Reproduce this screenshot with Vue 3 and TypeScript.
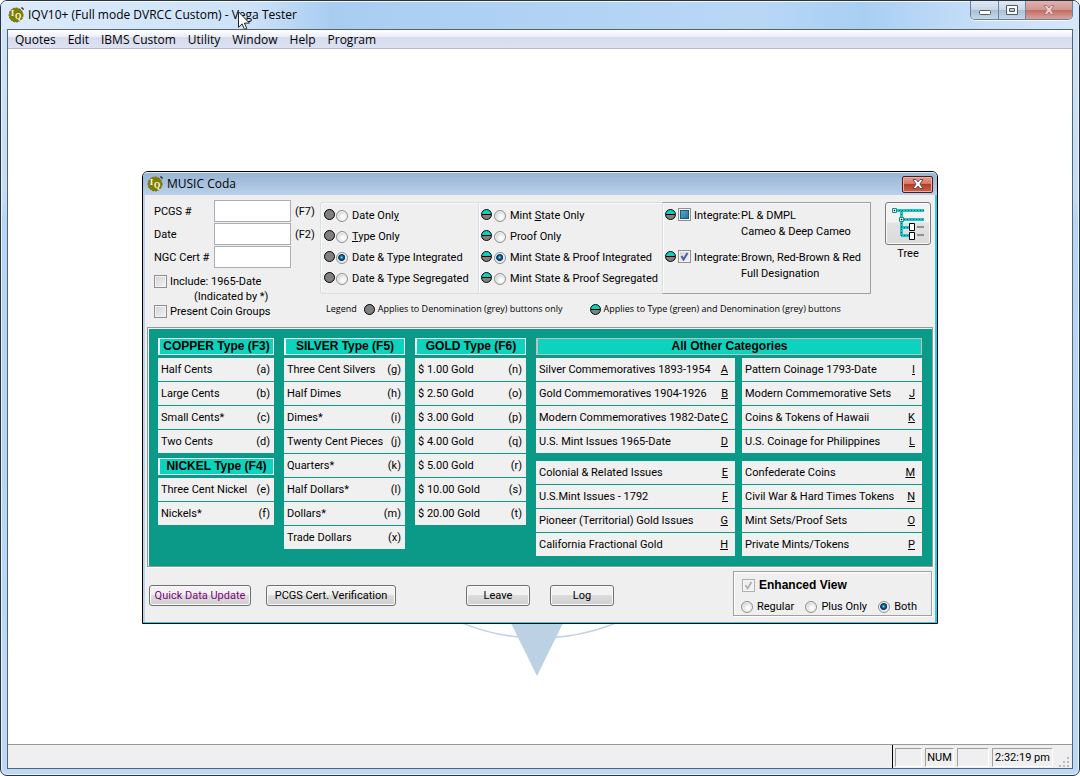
<script setup lang="ts">
import { ref } from 'vue'

interface Entry {
  label: string
  key: string
}

const menus: string[] = ['Quotes', 'Edit', 'IBMS Custom', 'Utility', 'Window', 'Help', 'Program']

const toEntries = (rows: [string, string][]): Entry[] => rows.map(([label, key]) => ({ label, key }))

const copper = toEntries([['Half Cents', '(a)'], ['Large Cents', '(b)'], ['Small Cents*', '(c)'], ['Two Cents', '(d)']])
const nickel = toEntries([['Three Cent Nickel', '(e)'], ['Nickels*', '(f)']])
const silver = toEntries([
  ['Three Cent Silvers', '(g)'], ['Half Dimes', '(h)'], ['Dimes*', '(i)'], ['Twenty Cent Pieces', '(j)'],
  ['Quarters*', '(k)'], ['Half Dollars*', '(l)'], ['Dollars*', '(m)'], ['Trade Dollars', '(x)'],
])
const gold = toEntries([
  ['$ 1.00 Gold', '(n)'], ['$ 2.50 Gold', '(o)'], ['$ 3.00 Gold', '(p)'], ['$ 4.00 Gold', '(q)'],
  ['$ 5.00 Gold', '(r)'], ['$ 10.00 Gold', '(s)'], ['$ 20.00 Gold', '(t)'],
])

const typeColumns = [
  { id: 'copper', sections: [{ title: 'COPPER Type (F3)', rows: copper }, { title: 'NICKEL Type (F4)', rows: nickel }] },
  { id: 'silver', sections: [{ title: 'SILVER Type (F5)', rows: silver }] },
  { id: 'gold', sections: [{ title: 'GOLD Type (F6)', rows: gold }] },
]

const otherBlocks: Entry[][] = [
  toEntries([['Silver Commemoratives 1893-1954', 'A'], ['Gold Commemoratives 1904-1926', 'B'], ['Modern Commemoratives 1982-Date', 'C'], ['U.S. Mint Issues 1965-Date', 'D']]),
  toEntries([['Pattern Coinage 1793-Date', 'I'], ['Modern Commemorative Sets', 'J'], ['Coins & Tokens of Hawaii', 'K'], ['U.S. Coinage for Philippines', 'L']]),
  toEntries([['Colonial & Related Issues', 'E'], ['U.S.Mint Issues - 1792', 'F'], ['Pioneer (Territorial) Gold Issues', 'G'], ['California Fractional Gold', 'H']]),
  toEntries([['Confederate Coins', 'M'], ['Civil War & Hard Times Tokens', 'N'], ['Mint Sets/Proof Sets', 'O'], ['Private Mints/Tokens', 'P']]),
]

const dateOptions = [
  { value: 'date', before: 'Date Onl', hot: 'y', after: '' },
  { value: 'type', before: '', hot: 'T', after: 'ype Only' },
  { value: 'integrated', before: 'Date & Type Integrated', hot: '', after: '' },
  { value: 'segregated', before: 'Date & Type Segregated', hot: '', after: '' },
]
const mintOptions = [
  { value: 'mint', before: 'Mint ', hot: 'S', after: 'tate Only' },
  { value: 'proof', before: 'Proof Only', hot: '', after: '' },
  { value: 'integrated', before: 'Mint State & Proof Integrated', hot: '', after: '' },
  { value: 'segregated', before: 'Mint State & Proof Segregated', hot: '', after: '' },
]
const viewOptions = ['Regular', 'Plus Only', 'Both']

const pcgs = ref('')
const coinDate = ref('')
const ngc = ref('')
const include1965 = ref(false)
const presentGroups = ref(false)
const dateMode = ref('integrated')
const mintMode = ref('integrated')
const integratePl = ref(false)
const integrateBrown = ref(true)
const enhanced = ref(true)
const view = ref('Both')
</script>

<template>
  <div class="window">
    <header class="titlebar">
      <svg class="app-icon" viewBox="0 0 16 16" aria-hidden="true">
        <path d="M13 1h2v2" fill="none" stroke="#111" />
        <circle cx="8" cy="8" r="7" fill="#808000" stroke="#6b6b10" stroke-dasharray="2 1" />
        <text x="3" y="9" class="icon-text">I</text>
        <text x="7" y="12" class="icon-text">Q</text>
      </svg>
      <h1 class="title">IQV10+ (Full mode DVRCC Custom) - Vega Tester</h1>
      <div class="caption-buttons">
        <button type="button" aria-label="Minimize" class="cap cap-min">
          <svg viewBox="0 0 14 12"><rect x="1.500" y="6.500" width="11" height="4" rx="1" fill="#fff" stroke="#535666" /></svg>
        </button>
        <button type="button" aria-label="Maximize" class="cap cap-max">
          <svg viewBox="0 0 14 12"><path fill-rule="evenodd" d="M1.500 1.500h11v9h-11zM4.500 4.500h5v3h-5z" fill="#fff" stroke="#535666" /></svg>
        </button>
        <button type="button" aria-label="Close" class="cap cap-close">
          <svg viewBox="0 0 14 12"><path d="M2 1.500h3l2 2.500 2-2.500h3L9 6l3 4.500H9L7 8l-2 2.500H2L5 6z" fill="#f1cfcd" stroke="#a77b7d" /></svg>
        </button>
      </div>
      <svg class="cursor" viewBox="0 0 12 19" aria-hidden="true">
        <path d="M.5.8v15.500l3.600-3.400 2.400 5.500 2.300-1-2.400-5.300h5z" fill="#fff" stroke="#222" />
      </svg>
    </header>

    <div class="frame">
      <nav class="menubar">
        <button v-for="menu in menus" :key="menu" type="button" class="menu">{{ menu }}</button>
      </nav>

      <main class="workspace">
        <svg class="emblem" viewBox="0 0 420 560" aria-hidden="true">
          <circle cx="211" cy="316" r="205" fill="none" stroke="#bdd1e5" stroke-width="1.500" />
          <path d="M141 421h136l-68 138z" fill="#bdd1e5" />
        </svg>

        <section class="dialog" role="dialog" aria-labelledby="dialog-title">
          <header class="dialog-title">
            <svg class="app-icon" viewBox="0 0 16 16" aria-hidden="true">
              <path d="M13 1h2v2" fill="none" stroke="#111" />
              <circle cx="8" cy="8" r="7" fill="#808000" stroke="#6b6b10" stroke-dasharray="2 1" />
              <text x="3" y="9" class="icon-text">I</text>
              <text x="7" y="12" class="icon-text">Q</text>
            </svg>
            <h2 id="dialog-title" class="title">MUSIC Coda</h2>
            <button type="button" class="dialog-close" aria-label="Close">
              <svg viewBox="0 0 14 12"><path d="M2 1.500h3l2 2.500 2-2.500h3L9 6l3 4.500H9L7 8l-2 2.500H2L5 6z" fill="#fff" stroke="#5a4a55" /></svg>
            </button>
          </header>

          <div class="dialog-body">
            <div class="top">
              <div class="lookup">
                <div class="fields">
                  <label for="pcgs">PCGS #</label>
                  <input id="pcgs" v-model="pcgs" type="text" class="field" />
                  <span>(F7)</span>
                  <label for="coin-date">Date</label>
                  <input id="coin-date" v-model="coinDate" type="text" class="field" />
                  <span>(F2)</span>
                  <label for="ngc">NGC Cert #</label>
                  <input id="ngc" v-model="ngc" type="text" class="field" />
                </div>
                <div class="lookup-checks">
                  <label class="check-line"><input v-model="include1965" type="checkbox" class="check" />Include: 1965-Date</label>
                  <span class="note">(Indicated by *)</span>
                  <label class="check-line"><input v-model="presentGroups" type="checkbox" class="check" />Present Coin Groups</label>
                </div>
              </div>

              <div class="options">
                <div class="groups">
                  <div class="group" role="radiogroup" aria-label="Date and type">
                    <label v-for="o in dateOptions" :key="o.value" class="option">
                      <i class="dot grey"></i>
                      <input v-model="dateMode" type="radio" name="date-mode" :value="o.value" class="radio" />
                      <span class="option-text">{{ o.before }}<u v-if="o.hot">{{ o.hot }}</u>{{ o.after }}</span>
                    </label>
                  </div>
                  <div class="group group-mint" role="radiogroup" aria-label="Mint state and proof">
                    <label v-for="o in mintOptions" :key="o.value" class="option">
                      <i class="dot split"></i>
                      <input v-model="mintMode" type="radio" name="mint-mode" :value="o.value" class="radio" />
                      <span class="option-text">{{ o.before }}<u v-if="o.hot">{{ o.hot }}</u>{{ o.after }}</span>
                    </label>
                  </div>
                  <div class="group group-integrate">
                    <label class="integrate">
                      <i class="dot split"></i>
                      <input v-model="integratePl" type="checkbox" class="check" :indeterminate.prop="true" />
                      <span class="integrate-name">Integrate:</span>
                      <span class="integrate-text">PL &amp; DMPL<br />Cameo &amp; Deep Cameo</span>
                    </label>
                    <label class="integrate">
                      <i class="dot split"></i>
                      <input v-model="integrateBrown" type="checkbox" class="check" />
                      <span class="integrate-name">Integrate:</span>
                      <span class="integrate-text">Brown, Red-Brown &amp; Red<br />Full Designation</span>
                    </label>
                  </div>
                </div>
                <div class="legend">
                  <span>Legend</span>
                  <span class="legend-item"><i class="dot grey"></i>Applies to Denomination (grey) buttons only</span>
                  <span class="legend-item legend-type"><i class="dot split"></i>Applies to Type (green) and Denomination (grey) buttons</span>
                </div>
              </div>

              <div class="tree">
                <button id="tree-button" type="button" class="tree-button" aria-labelledby="tree-label">
                  <svg viewBox="0 0 34 34" aria-hidden="true">
                    <path d="M2 3.500h31M10.500 4v25M10 12.500h23M10 20.500h8M10 28.500h8" fill="none" stroke="#1cc3cf" stroke-width="3" />
                    <path d="M2 3.500h31M10.500 4v25M10 12.500h23M10 20.500h8M10 28.500h8" fill="none" stroke="#0a6a50" stroke-dasharray="1 2" />
                    <path d="M26 20h7M26 28h7" stroke="#909090" stroke-width="2" />
                    <path d="M1.500 1.500h4v4h-4zM8.500 10.500h4v4h-4z" fill="#fff" stroke="#0d8f9a" />
                    <path d="M3 3h1v1H3zM10 12h1v1h-1z" fill="#000" stroke="#000" stroke-width=".5" />
                    <path d="M18.500 16.500h5v7h-5zM18.500 25.500h5v7h-5z" fill="#fff" stroke="#000" />
                  </svg>
                </button>
                <span id="tree-label">Tree</span>
              </div>
            </div>

            <div class="catalog">
              <div v-for="column in typeColumns" :key="column.id" class="column">
                <section v-for="s in column.sections" :key="s.title" class="section">
                  <h3 class="heading">{{ s.title }}</h3>
                  <div class="rows">
                    <button v-for="row in s.rows" :key="row.key" type="button" class="row">
                      <span>{{ row.label }}</span><span class="key">{{ row.key }}</span>
                    </button>
                  </div>
                </section>
              </div>
              <section class="section">
                <h3 class="heading heading-other">All Other Categories</h3>
                <div class="others">
                  <div v-for="(block, i) in otherBlocks" :key="i" class="rows">
                    <button v-for="row in block" :key="row.key" type="button" class="row row-other">
                      <span>{{ row.label }}</span><u>{{ row.key }}</u>
                    </button>
                  </div>
                </div>
              </section>
            </div>

            <footer class="actions">
              <button type="button" class="action quick">Quick Data Update</button>
              <button type="button" class="action verify">PCGS Cert. Verification</button>
              <div class="center-actions">
                <button type="button" class="action">Leave</button>
                <button type="button" class="action">Log</button>
              </div>
              <div class="enhanced">
                <label class="enhanced-title"><input v-model="enhanced" type="checkbox" class="check" disabled />Enhanced View</label>
                <div class="views">
                  <label v-for="v in viewOptions" :key="v" class="view">
                    <input v-model="view" type="radio" name="view" :value="v" class="radio" />{{ v }}
                  </label>
                </div>
              </div>
            </footer>
          </div>
        </section>
      </main>

      <footer class="statusbar">
        <div class="status-panels">
          <span class="panel panel-small"></span>
          <span class="panel panel-num">NUM</span>
          <span class="panel panel-mid"></span>
          <span class="panel panel-time">2:32:19 pm</span>
          <svg class="grip" viewBox="0 0 10 10" aria-hidden="true">
            <path d="M8 0h2v2H8zM4 4h2v2H4zM8 4h2v2H8zM0 8h2v2H0zM4 8h2v2H4zM8 8h2v2H8z" fill="#bbb" />
          </svg>
        </div>
      </footer>
    </div>
  </div>
</template>

<style>
html,
body {
  margin: 0;
  background: #fff;
}
</style>

<style scoped>
* {
  box-sizing: border-box;
}

button,
input {
  margin: 0;
  padding: 0;
  font: inherit;
  color: inherit;
}

button {
  border: 0;
  background: none;
}

.window {
  display: flex;
  flex-direction: column;
  min-height: 100vh;
  padding: 0 6px 6px;
  border: 1px solid #2a3440;
  border-radius: 7px;
  background: linear-gradient(#cfe4fb 0, #c3dcf7 200px, #b4d5f5 220px, #bcd9f7 100%);
  box-shadow: inset 0 0 0 1px #e8f4ff;
  font-family: Roboto, "Liberation Sans", Arial, sans-serif;
  font-size: 11px;
  color: #000;
}

.titlebar {
  position: relative;
  display: flex;
  align-items: flex-start;
  height: 28px;
  margin: 0 -6px;
  padding-left: 7px;
  border-top: 1px solid #f2f9ff;
  border-radius: 6px 6px 0 0;
  background: linear-gradient(90deg, #dcebfb 0, #cde2f8 250px, #a9cdf1 330px, #b9d7f5 70%, #a8cff2 80%, #c9e0f9 92%, #d5e7fb 100%);
}

.app-icon {
  width: 16px;
  height: 16px;
  flex: none;
}

.titlebar .app-icon {
  margin-top: 5px;
}

.icon-text {
  font: bold 8px "Liberation Serif", serif;
  fill: #fff;
}

.title {
  margin: 0 0 0 4px;
  font: 12px/16px "Open Sans", "Noto Sans", sans-serif;
}

.titlebar .title {
  margin-top: 5px;
}

.caption-buttons {
  display: flex;
  margin: -1px 6px 0 auto;
  border: 1px solid #6f7f92;
  border-top: 0;
  border-radius: 0 0 5px 5px;
  overflow: hidden;
  box-shadow: 0 1px 0 #f2f9ff;
}

.cap {
  display: flex;
  align-items: center;
  justify-content: center;
  width: 28px;
  height: 18px;
  border-right: 1px solid #71849a;
  background: linear-gradient(#dfe9f4 0, #c8d7e7 48%, #a9bfd6 50%, #c4d8ec 100%);
}

.cap svg,
.dialog-close svg {
  width: 14px;
  height: 12px;
}

.cap-max {
  width: 27px;
}

.cap-close {
  width: 46px;
  border-right: 0;
  background: linear-gradient(#e0b2ae 0, #d29690 48%, #c06b64 50%, #d9a49b 100%);
}

.cursor {
  position: absolute;
  top: 9px;
  left: 237px;
  width: 12px;
  height: 19px;
  z-index: 2;
}

.frame {
  display: flex;
  flex: 1;
  flex-direction: column;
  border: 1px solid #59626b;
  background: #fff;
}

.menubar {
  display: flex;
  height: 19px;
  padding-left: 7px;
  gap: 12px;
  border-bottom: 1px solid #b5bacb;
  background: linear-gradient(#fff 0, #eceff7 38%, #d6dcee 42%, #dde2f2 100%);
  font: 12px/19px "Open Sans", "Noto Sans", sans-serif;
}

.workspace {
  position: relative;
  display: flex;
  flex: 1;
  align-items: center;
  padding: 2px 134px 0;
}

.emblem {
  position: absolute;
  top: 50%;
  left: 50%;
  width: 420px;
  height: 560px;
  margin: -280px 0 0 -212px;
}

.dialog {
  position: relative;
  flex: 1;
  min-width: 0;
  padding: 0 2px 1px;
  border: 1px solid #000;
  border-radius: 6px 6px 0 0;
  background: linear-gradient(90deg, #b9d2ee 50%, #35c8ee 50%);
  box-shadow: inset 0 -1px 0 #35c8ee;
}

.dialog-title {
  display: flex;
  align-items: center;
  height: 23px;
  margin: 0 -2px;
  padding: 0 4px;
  border-top: 1px solid #e4effa;
  border-radius: 5px 5px 0 0;
  background: linear-gradient(#98b4d2, #b9d1ea);
}

.dialog-close {
  display: flex;
  align-items: center;
  justify-content: center;
  width: 31px;
  height: 17px;
  margin-left: auto;
  border: 1px solid #4c1a20;
  border-radius: 2px;
  background: linear-gradient(#e5a091 0, #d37763 45%, #b83c26 50%, #cf6249 100%);
  box-shadow: inset 0 0 0 1px #e6b0a4;
}

.dialog-body {
  background: #efefef;
}

.top {
  display: flex;
  height: 132px;
  padding: 5px 4px 0 9px;
}

.lookup {
  flex: none;
  width: 166px;
}

.fields {
  display: grid;
  grid-template-columns: 60px 77px auto;
  grid-auto-rows: 22px;
  row-gap: 1px;
  align-items: center;
}

.fields span {
  padding-left: 4px;
}

.field {
  width: 77px;
  height: 22px;
  padding: 0 3px;
  border: 1px solid #abadb3;
  background: #fff;
}

.lookup-checks {
  display: flex;
  flex-direction: column;
  margin-top: 6px;
  line-height: 15px;
}

.check-line {
  display: flex;
  align-items: center;
  gap: 3px;
  white-space: nowrap;
}

.note {
  padding-left: 40px;
}

.check {
  appearance: none;
  flex: none;
  width: 13px;
  height: 13px;
  border: 1px solid #8e8f8f;
  background: linear-gradient(135deg, #cfd2d6, #f4f4f4);
  box-shadow: inset 0 0 0 1px #f4f4f4;
}

.check:checked {
  background: url("data:image/svg+xml,%3Csvg xmlns='http://www.w3.org/2000/svg' viewBox='0 0 11 11'%3E%3Cpath d='M2.500 5l2 3.500L8.500 2' fill='none' stroke='%234b5e9c' stroke-width='2'/%3E%3C/svg%3E") center / 11px 11px no-repeat, linear-gradient(135deg, #cfd2d6, #f4f4f4);
}

.check:disabled {
  border-color: #b1b1b1;
  background: url("data:image/svg+xml,%3Csvg xmlns='http://www.w3.org/2000/svg' viewBox='0 0 11 11'%3E%3Cpath d='M2.500 5l2 3.500L8.500 2' fill='none' stroke='%23aaa' stroke-width='1.500'/%3E%3C/svg%3E") center / 11px 11px no-repeat, #f0f0f0;
}

.check:indeterminate {
  background: linear-gradient(135deg, #5fb9dc, #17648f);
  box-shadow: inset 0 0 0 1px #f4f4f4, inset 0 0 0 2px #23557a;
}

.radio {
  appearance: none;
  flex: none;
  width: 12px;
  height: 12px;
  border: 1px solid #8e8f8f;
  border-radius: 50%;
  background: radial-gradient(circle at 60% 60%, #fafafa 20%, #c9cdd2 75%);
  box-shadow: inset 0 0 0 1px #f4f4f4;
}

.radio:checked {
  background: radial-gradient(circle at 46% 44%, #8fe0ff 0, #2181b5 16%, #0b3353 34%, #10426a 42%, #e3e7eb 50%);
}

.options {
  flex: 1;
  min-width: 0;
  padding-top: 2px;
}

.groups {
  display: grid;
  grid-template-columns: 158fr 184fr 209fr;
}

.group {
  display: flex;
  flex-direction: column;
  height: 92px;
  padding: 2px 0 0 3px;
  border: 1px solid #d5dfe5;
  border-right: 0;
  border-radius: 3px 0 0 3px;
  box-shadow: inset 1px 1px 0 #fbfbfb;
  white-space: nowrap;
}

.option {
  display: flex;
  align-items: center;
  height: 21px;
}

.dot {
  flex: none;
  width: 11px;
  height: 11px;
  border: 1px solid #000;
  border-radius: 50%;
}

.grey {
  background: #808080;
}

.split {
  background: linear-gradient(#0bd1bb 0 4px, #000 4px 5px, #808080 5px);
}

.option .dot {
  margin-bottom: 2px;
}

.option .radio {
  margin: 1px 0 0 1px;
}

.option-text {
  padding-left: 4px;
}

.group-mint {
  padding-left: 2px;
  border-radius: 0;
}

.group-mint .radio {
  margin-left: 2px;
}

.group-integrate {
  gap: 10px;
  padding: 5px 0 0 2px;
  border-color: #a0a0a0;
  border-left-color: #d5dfe5;
  border-right: 1px solid #a0a0a0;
  border-radius: 0;
}

.integrate {
  display: flex;
  align-items: flex-start;
  line-height: 16px;
}

.integrate .dot {
  margin-top: 1px;
}

.integrate .check {
  margin: 0 3px 0 2px;
}

.integrate-name {
  width: 47px;
}

.legend {
  display: flex;
  margin-top: 9px;
  padding-left: 6px;
  font: 9px/12px "Open Sans", "Noto Sans", sans-serif;
  white-space: nowrap;
}

.legend-item {
  display: flex;
  align-items: center;
  gap: 3px;
  margin-left: 7px;
}

.legend-type {
  margin-left: 27px;
}

.tree {
  display: flex;
  flex: none;
  flex-direction: column;
  align-items: center;
  width: 46px;
  margin: 2px 0 0 14px;
  line-height: 18px;
}

.tree-button {
  display: flex;
  align-items: center;
  justify-content: center;
  width: 46px;
  height: 43px;
  border: 1px solid #7b7b7b;
  border-radius: 3px;
  background: linear-gradient(#f2f2f2 0 45%, #e2e2e2 50%, #dadada);
  box-shadow: inset 0 0 0 1px #fafafa;
}

.tree-button svg {
  width: 34px;
  height: 34px;
}

.catalog {
  display: grid;
  grid-template-columns: 116fr 121fr 111fr 386fr;
  gap: 10px;
  margin: 0 2px;
  padding: 10px;
  border: 1px solid #969696;
  background: #0b9a88;
  box-shadow: inset 1px 1px 0 #f4f4f4, 1px 1px 0 #fff;
}

.column {
  display: flex;
  flex-direction: column;
  gap: 5px;
}

.section {
  display: flex;
  flex-direction: column;
  gap: 3px;
}

.heading {
  margin: 0;
  border: 1px solid #f0f0f0;
  border-left-width: 2px;
  background: #0bd3bd;
  font: bold 12px/15px "Liberation Sans", Arial, sans-serif;
  text-align: center;
  white-space: nowrap;
}

.heading-other {
  border-color: #c0c0c0;
}

.rows {
  display: flex;
  flex-direction: column;
  gap: 1px;
}

.row {
  display: flex;
  align-items: center;
  justify-content: space-between;
  height: 23px;
  padding: 0 4px 0 3px;
  background: #f0f0f0;
  white-space: nowrap;
}

.row-other {
  padding-right: 7px;
}

.others {
  display: grid;
  grid-template-columns: 199fr 180fr;
  gap: 8px 7px;
}

.actions {
  display: flex;
  align-items: flex-start;
  gap: 15px;
  padding: 4px 3px 6px 4px;
}

.action {
  width: 64px;
  height: 21px;
  margin-top: 14px;
  border: 1px solid #707070;
  border-radius: 3px;
  background: linear-gradient(#f2f2f2 0 45%, #dcdcdc 50%, #cfcfcf);
  box-shadow: inset 0 0 0 1px #fafafa;
  white-space: nowrap;
}

.quick {
  width: 102px;
  color: #800080;
}

.verify {
  width: 130px;
}

.center-actions {
  display: flex;
  gap: 20px;
  margin-left: 55px;
}

.enhanced {
  width: 199px;
  height: 45px;
  margin-left: auto;
  padding: 5px 8px 0;
  border: 1px solid #a0a0a0;
  box-shadow: inset 1px 1px 0 #fff, 1px 1px 0 #fff;
}

.enhanced-title {
  display: flex;
  align-items: center;
  gap: 4px;
  font: bold 12px/16px "Liberation Sans", Arial, sans-serif;
}

.views {
  display: flex;
  justify-content: space-between;
  padding: 7px 6px 0 0;
}

.view {
  display: flex;
  align-items: center;
  gap: 4px;
}

.view .radio {
  margin-left: -1px;
}

.statusbar {
  display: flex;
  justify-content: flex-end;
  height: 24px;
  border-top: 1px solid #9a9a9a;
  background: #efefef;
}

.status-panels {
  display: flex;
  align-items: flex-start;
  gap: 3px;
  padding: 3px 3px 0 2px;
  border-left: 1px solid #000;
}

.panel {
  height: 19px;
  border: 1px solid #fff;
  border-top-color: #a0a0a0;
  border-left-color: #a0a0a0;
  line-height: 18px;
  text-align: center;
}

.panel-small {
  width: 27px;
}

.panel-num {
  width: 29px;
}

.panel-mid {
  width: 32px;
}

.panel-time {
  width: 61px;
}

.grip {
  width: 10px;
  height: 10px;
  margin: 9px 0 0 3px;
}
</style>
